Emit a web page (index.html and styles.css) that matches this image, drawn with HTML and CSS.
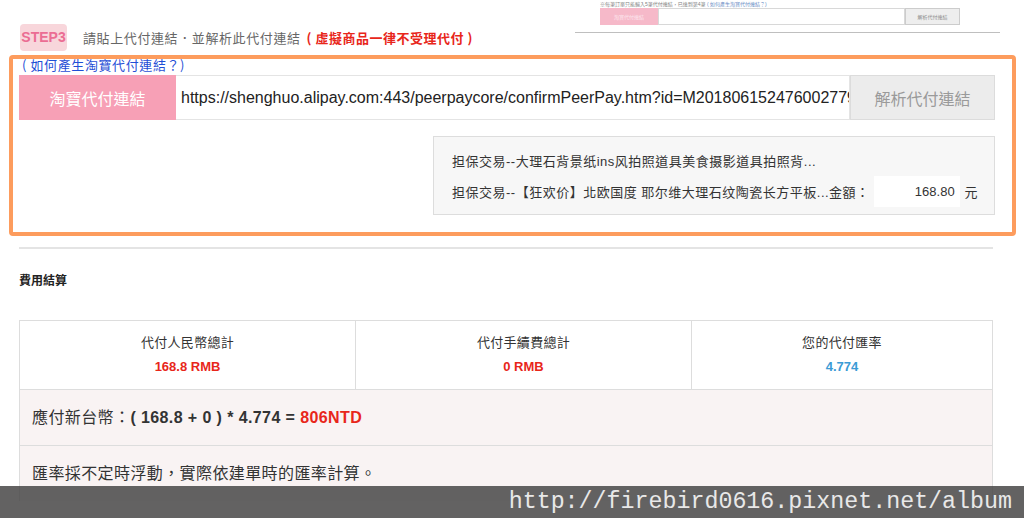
FILE: index.html
```html
<!DOCTYPE html>
<html lang="zh-Hant">
<head>
    <meta charset="UTF-8">
    <meta name="viewport" content="width=device-width, initial-scale=1.0">
    <title>代付 STEP3</title>
    <link rel="stylesheet" href="styles.css">
</head>
<body>

    <div class="thumb">
        <div class="thumb-note">※每筆訂單只能輸入5筆代付連結，已達到第4筆 <span>( 如何產生淘寶代付連結？)</span></div>
        <div class="thumb-row">
            <div class="thumb-label">淘寶代付連結</div>
            <div class="thumb-input"></div>
            <div class="thumb-btn">解析代付連結</div>
        </div>
    </div>

    <div class="step">
        <span class="step-badge">STEP3</span>
        <span class="step-text">請貼上代付連結．並解析此代付連結</span>
        <span class="step-warn">( 虛擬商品一律不受理代付 )</span>
    </div>

    <div class="link-box">
        <a class="how-link" href="#">( 如何產生淘寶代付連結？)</a>
        <div class="link-row">
            <div class="link-label">淘寶代付連結</div>
            <div class="link-input">https://shenghuo.alipay.com:443/peerpaycore/confirmPeerPay.htm?id=M2018061524760027797</div>
            <div class="link-btn">解析代付連結</div>
        </div>
        <div class="info">
            <div class="info-line">担保交易--大理石背景纸ins风拍照道具美食摄影道具拍照背...</div>
            <div class="info-line">
                担保交易--【狂欢价】北欧国度 耶尔维大理石纹陶瓷长方平板...金額：
                <span class="amount">168.80</span>
                <span class="unit">元</span>
            </div>
        </div>
    </div>

    <div class="divider"></div>

    <h3 class="fee-title">費用結算</h3>

    <div class="fee-table">
        <div class="fee-cols">
            <div class="fee-cell">
                <div class="fee-name">代付人民幣總計</div>
                <div class="fee-val red">168.8 RMB</div>
            </div>
            <div class="fee-cell">
                <div class="fee-name">代付手續費總計</div>
                <div class="fee-val red">0 RMB</div>
            </div>
            <div class="fee-cell">
                <div class="fee-name">您的代付匯率</div>
                <div class="fee-val blue">4.774</div>
            </div>
        </div>
        <div class="fee-row">應付新台幣：<b>( 168.8 + 0 ) * 4.774 = </b><b class="red">806NTD</b></div>
        <div class="fee-row">匯率採不定時浮動，實際依建單時的匯率計算。</div>
    </div>

    <div class="watermark">http://firebird0616.pixnet.net/album</div>

</body>
</html>
```

FILE: styles.css
```css
* { margin: 0; padding: 0; box-sizing: border-box; }
body { background: #fff; color: #333; font-family: 'Liberation Sans', 'Noto Sans CJK TC', sans-serif; width: 1024px; height: 518px; overflow: hidden; position: relative; }

.thumb { margin-left: 575px; width: 425px; height: 33px; border-bottom: 1px solid #aaa; padding-left: 25px; opacity: 0.75; }
.thumb-note { font-size: 5px; line-height: 7px; color: #555; padding-top: 1px; white-space: nowrap; }
.thumb-note span { color: #335fb0; }
.thumb-row { display: flex; height: 17px; width: 360px; }
.thumb-label { width: 58px; background: #f4a2b8; color: #fbe0e8; font-size: 5px; display: flex; align-items: center; justify-content: center; }
.thumb-input { flex: 1; border: 1px solid #ccc; background: #fff; }
.thumb-btn { width: 55px; background: #e9e9e9; border: 1px solid #bbb; color: #666; font-size: 5px; display: flex; align-items: center; justify-content: center; }

.step { display: flex; align-items: center; height: 28px; margin: -10px 0 0 20px; gap: 16px; font-family: 'Noto Sans CJK TC', sans-serif; font-size: 13px; }
.step-badge { background: #f8d6db; color: #eb6d93; font-family: 'Liberation Sans', sans-serif; font-weight: bold; font-size: 14px; width: 47px; height: 27px; line-height: 27px; text-align: center; border-radius: 4px; }
.step-text { color: #666; letter-spacing: 0.6px; }
.step-warn { color: #e8261a; font-weight: bold; margin-left: -10px; letter-spacing: 0.5px; }

.link-box { margin: 4px 8px 0 9px; height: 181px; border: 4px solid #fd9c5d; border-radius: 4px; padding: 0 17px 0 6px; }
.how-link { display: block; color: #1f4fd6; text-decoration: none; font-family: 'Noto Sans CJK TC', sans-serif; font-size: 13px; line-height: 16px; margin: -2px 0 0 3px; letter-spacing: 0.6px; }
.link-row { display: flex; height: 45px; margin-top: 2px; }
.link-label { width: 157px; background: #f7a0b6; color: #fff; font-family: 'Noto Sans CJK TC', sans-serif; font-size: 16px; display: flex; align-items: center; justify-content: center; }
.link-input { flex: 1; overflow: hidden; white-space: nowrap; border: 1px solid #e4e4e4; border-left: none; font-size: 16px; line-height: 43px; padding-left: 5px; color: #222; }
.link-btn { width: 145px; background: #ececec; border: 1px solid #dcdcdc; color: #9a9a9a; font-family: 'Noto Sans CJK TC', sans-serif; font-size: 16px; display: flex; align-items: center; justify-content: center; }

.info { margin: 16px 0 0 414px; height: 79px; background: #f7f7f7; border: 1px solid #ddd; padding: 8px 0 0 18px; font-size: 13px; letter-spacing: 0.5px; color: #333; }
.info-line { display: flex; align-items: center; height: 31px; }
.amount { width: 86px; height: 31px; background: #fff; margin-left: 4px; text-align: right; line-height: 31px; padding-right: 5px; letter-spacing: 0; }
.unit { margin-left: 5px; }

.divider { margin: 11px 31px 0 19px; height: 2px; background: #e4e4e4; }

.fee-title { font-size: 12px; font-weight: bold; color: #222; margin: 24px 0 0 19px; line-height: 16px; }

.fee-table { margin: 31px 31px 0 19px; border: 1px solid #ddd; border-bottom: none; font-family: 'Liberation Sans', 'Noto Sans CJK TC', sans-serif; }
.fee-cols { display: grid; grid-template-columns: 336px 336px 1fr; height: 68px; }
.fee-cell { border-right: 1px solid #ddd; text-align: center; padding-top: 13px; }
.fee-cell:last-child { border-right: none; }
.fee-name { font-size: 13px; line-height: 18px; color: #333; letter-spacing: 0.3px; }
.fee-val { font-size: 13px; font-weight: bold; line-height: 18px; margin-top: 6px; }
.red { color: #e8261a; }
.blue { color: #3a9bd5; }
.fee-row { background: #f9f3f3; border-top: 1px solid #ddd; height: 56px; line-height: 56px; padding-left: 12px; font-size: 16px; color: #333; letter-spacing: 0.4px; }
.fee-row b { font-weight: bold; }

.watermark { position: absolute; left: 0; right: 0; bottom: 0; height: 32px; background: rgba(72, 71, 71, 0.85); color: #e8e8e8; font-family: 'Liberation Mono', monospace; font-size: 23.3px; line-height: 32px; text-align: right; padding-right: 12px; }
```
